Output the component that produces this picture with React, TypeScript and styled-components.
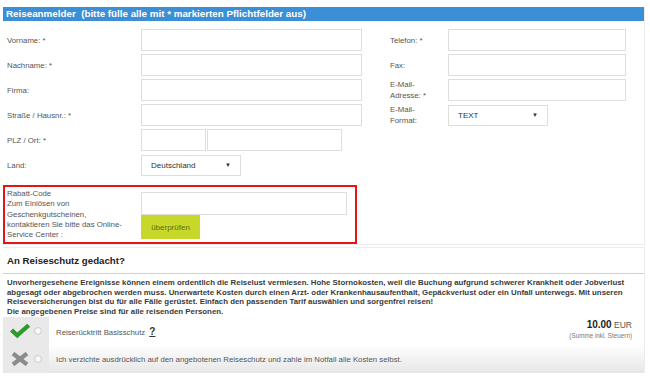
import styled, { createGlobalStyle } from 'styled-components';

const GlobalStyle = createGlobalStyle`
  body {
    margin: 0;
    background: #ffffff;
    font-family: "Liberation Sans", Arial, sans-serif;
  }
`;

const Page = styled.div`
  width: 650px;
  box-sizing: border-box;
  padding: 7px 5px 0 3px;
`;

const Panel = styled.div`
  border-right: 1px solid #ececec;
  border-bottom: 1px solid #ececec;
`;

const PanelHeader = styled.div`
  height: 14px;
  line-height: 14px;
  padding-left: 3px;
  background: #3a8fd6;
  color: #ffffff;
  font-size: 9.8px;
  font-weight: bold;
  white-space: pre;
`;

const FormBody = styled.div`
  display: flex;
  gap: 28px;
  padding: 8px 0 0 4px;
`;

const Column = styled.div`
  display: flex;
  flex-direction: column;
  gap: 3px;
`;

const Row = styled.div`
  display: flex;
  align-items: center;
  height: 22px;
`;

const Label = styled.div<{ $w: number }>`
  width: ${(p) => p.$w}px;
  flex-shrink: 0;
  font-size: 7.8px;
  line-height: 11px;
  color: #555555;
`;

const TextInput = styled.input<{ $w: number; $h?: number }>`
  width: ${(p) => p.$w}px;
  height: ${(p) => p.$h ?? 22}px;
  box-sizing: border-box;
  margin: 0;
  border: 1px solid #dedede;
  background: #ffffff;
  outline: none;
`;

const InputPair = styled.div`
  display: flex;
  gap: 1px;
`;

const SelectBox = styled.div<{ $w: number }>`
  width: ${(p) => p.$w}px;
  height: 21px;
  box-sizing: border-box;
  display: flex;
  align-items: center;
  justify-content: space-between;
  padding: 0 9px 0 9px;
  border: 1px solid #dedede;
  background: #ffffff;
  font-size: 8px;
  color: #333333;
`;

const Arrow = styled.span`
  font-size: 6px;
  color: #333333;
`;

const DiscountBox = styled.div`
  margin-top: 9px;
  width: 354px;
  box-sizing: border-box;
  display: flex;
  border: 2px solid #e21616;
  padding: 2px 8px 2px 2px;
`;

const DiscountLabel = styled.div`
  width: 134px;
  flex-shrink: 0;
  font-size: 7.8px;
  line-height: 10.3px;
  color: #555555;
`;

const DiscountFields = styled.div`
  display: flex;
  flex-direction: column;
  padding-top: 3px;
`;

const CheckButton = styled.button`
  width: 59px;
  height: 24px;
  margin: 0;
  border: none;
  background: #c7d82a;
  color: #5f6e12;
  font-family: inherit;
  font-size: 8px;
  padding: 0;
`;

const InsuranceBox = styled.div`
  margin-top: 2px;
  border-top: 1px solid #ececec;
  border-right: 1px solid #ececec;
`;

const InsuranceTitle = styled.div`
  height: 25px;
  line-height: 25px;
  padding-left: 4px;
  border-bottom: 1px solid #c6d4df;
  font-size: 9.7px;
  font-weight: bold;
  color: #222222;
`;

const InsuranceText = styled.p`
  margin: 0;
  padding: 4px 4px 1px 4px;
  font-size: 7.85px;
  font-weight: bold;
  line-height: 9.5px;
  color: #3a3a3a;
  white-space: nowrap;
`;

const Options = styled.div`
  display: grid;
  grid-template-columns: 46px 1fr;
  grid-auto-rows: 28px;
`;

const IconCell = styled.div`
  display: flex;
  align-items: center;
  gap: 3px;
  padding-left: 6px;
  background: #e9e9e9;
`;

const OptionCell = styled.div<{ $shade?: boolean }>`
  display: flex;
  align-items: center;
  justify-content: space-between;
  padding: 0 12px 0 7px;
  background: ${(p) => (p.$shade ? 'linear-gradient(#ffffff, #e6e6e6)' : '#ffffff')};
  font-size: 7.8px;
  color: #555555;
`;

const Help = styled.span`
  margin-left: 4px;
  font-size: 10px;
  font-weight: bold;
  color: #333333;
  text-decoration: underline;
`;

const Price = styled.div`
  text-align: right;
  color: #555555;
  margin-top: -4px;
`;

const Amount = styled.div`
  font-size: 8.5px;
  line-height: 12px;
  b {
    font-size: 10px;
    color: #222222;
  }
`;

const TaxNote = styled.div`
  font-size: 6.3px;
  line-height: 9px;
  color: #777777;
`;

const Radio = styled.span`
  width: 8px;
  height: 8px;
  box-sizing: border-box;
  border-radius: 50%;
  border: 1px solid #cfcfcf;
  background: radial-gradient(#ffffff, #ececec);
`;

const CheckIcon = () => (
  <svg width="22" height="16" viewBox="0 0 22 16">
    <path d="M1 8.5 L4.2 5.6 L8.2 9.4 L18.2 0.8 L21.2 3.8 L8.2 15.2 Z" fill="#2c9b2c" />
  </svg>
);

const CrossIcon = () => (
  <svg width="22" height="14" viewBox="0 0 22 14">
    <path d="M4 1.5 L18 12.5 M18 1.5 L4 12.5" stroke="#8c8c8c" strokeWidth="4.2" strokeLinecap="butt" />
  </svg>
);

const App = () => {
  return (
    <Page>
      <GlobalStyle />
      <Panel>
        <PanelHeader>Reiseanmelder  (bitte fülle alle mit * markierten Pflichtfelder aus)</PanelHeader>
        <FormBody>
          <Column>
            <Row>
              <Label $w={134}>Vorname: *</Label>
              <TextInput $w={221} />
            </Row>
            <Row>
              <Label $w={134}>Nachname: *</Label>
              <TextInput $w={221} />
            </Row>
            <Row>
              <Label $w={134}>Firma:</Label>
              <TextInput $w={221} />
            </Row>
            <Row>
              <Label $w={134}>Straße / Hausnr.: *</Label>
              <TextInput $w={221} />
            </Row>
            <Row>
              <Label $w={134}>PLZ / Ort: *</Label>
              <InputPair>
                <TextInput $w={65} />
                <TextInput $w={135} />
              </InputPair>
            </Row>
            <Row>
              <Label $w={134}>Land:</Label>
              <SelectBox $w={100}>
                Deutschland <Arrow>▼</Arrow>
              </SelectBox>
            </Row>
          </Column>
          <Column>
            <Row>
              <Label $w={58}>Telefon: *</Label>
              <TextInput $w={178} />
            </Row>
            <Row>
              <Label $w={58}>Fax:</Label>
              <TextInput $w={178} />
            </Row>
            <Row>
              <Label $w={58}>
                E-Mail-
                <br />
                Adresse: *
              </Label>
              <TextInput $w={178} />
            </Row>
            <Row>
              <Label $w={58}>
                E-Mail-
                <br />
                Format:
              </Label>
              <SelectBox $w={100}>
                TEXT <Arrow>▼</Arrow>
              </SelectBox>
            </Row>
          </Column>
        </FormBody>
        <DiscountBox>
          <DiscountLabel>
            Rabatt-Code
            <br />
            Zum Einlösen von
            <br />
            Geschenkgutscheinen,
            <br />
            kontaktieren Sie bitte das Online-
            <br />
            Service Center :
          </DiscountLabel>
          <DiscountFields>
            <TextInput $w={206} $h={23} />
            <CheckButton>überprüfen</CheckButton>
          </DiscountFields>
        </DiscountBox>
      </Panel>

      <InsuranceBox>
        <InsuranceTitle>An Reiseschutz gedacht?</InsuranceTitle>
        <InsuranceText>
          Unvorhergesehene Ereignisse können einem ordentlich die Reiselust vermiesen. Hohe Stornokosten, weil die Buchung aufgrund schwerer Krankheit oder Jobverlust
          <br />
          abgesagt oder abgebrochen werden muss. Unerwartete Kosten durch einen Arzt- oder Krankenhausaufenthalt, Gepäckverlust oder ein Unfall unterwegs. Mit unseren
          <br />
          Reiseversicherungen bist du für alle Fälle gerüstet. Einfach den passenden Tarif auswählen und sorgenfrei reisen!
          <br />
          Die angegebenen Preise sind für alle reisenden Personen.
        </InsuranceText>
        <Options>
          <IconCell>
            <CheckIcon />
            <Radio />
          </IconCell>
          <OptionCell>
            <span>
              Reiserücktritt Basisschutz<Help>?</Help>
            </span>
            <Price>
              <Amount>
                <b>10.00</b> EUR
              </Amount>
              <TaxNote>(Summe inkl. Steuern)</TaxNote>
            </Price>
          </OptionCell>
          <IconCell>
            <CrossIcon />
            <Radio />
          </IconCell>
          <OptionCell $shade>
            Ich verzichte ausdrücklich auf den angebotenen Reiseschutz und zahle im Notfall alle Kosten selbst.
          </OptionCell>
        </Options>
      </InsuranceBox>
    </Page>
  );
};

export default App;
